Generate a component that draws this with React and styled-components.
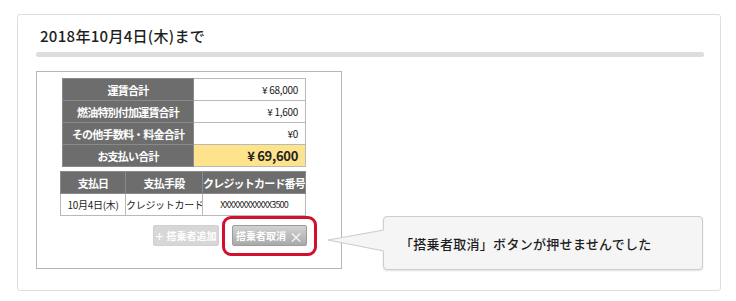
import React from 'react';
import styled, { createGlobalStyle } from 'styled-components';

const GlobalStyle = createGlobalStyle`
  body {
    margin: 0;
    background: #fff;
    font-family: "Noto Sans CJK JP", "Noto Sans", sans-serif;
    color: #222;
  }
`;

const Card = styled.div`
  box-sizing: border-box;
  width: 704px;
  height: 277px;
  margin: 14px 0 0 17px;
  padding: 11px 16px 0 18px;
  border: 1px solid #dedede;
  border-radius: 3px;
`;

const Title = styled.h2`
  margin: 0 0 6px 4px;
  font-size: 15px;
  line-height: 20px;
  font-weight: 500;
  letter-spacing: 0.3px;
  color: #1e1e1e;
`;

const Bar = styled.div`
  height: 5px;
  border-radius: 3px;
  background: #dcdddf;
`;

const Row = styled.div`
  display: flex;
  align-items: flex-end;
  margin-top: 14px;
`;

const Shot = styled.div`
  box-sizing: border-box;
  width: 306px;
  height: 198px;
  padding: 6px 35px 0 23px;
  border: 1px solid #b5b5b5;
  display: flex;
  flex-direction: column;
  align-items: flex-end;
`;

const Grid = styled.table`
  border-collapse: collapse;
  width: ${(p) => p.$w}px;
  margin-bottom: ${(p) => p.$mb || 0}px;
  table-layout: fixed;
  font-size: 10px;
`;

const Head = styled.th`
  height: 21px;
  padding: 0;
  background: #6d6d6d;
  color: #fff;
  font-size: 11px;
  font-weight: 700;
  letter-spacing: -0.8px;
  border: 1px solid #8a8a8a;
  text-align: center;
  white-space: nowrap;
  overflow: hidden;
`;

const Cell = styled.td`
  height: 21px;
  padding: ${(p) => (p.$right ? '0 7px 0 0' : '0')};
  background: ${(p) => (p.$total ? '#fde48c' : '#fff')};
  border: 1px solid #b9b9b9;
  text-align: ${(p) => (p.$right ? 'right' : 'center')};
  font-size: ${(p) => (p.$total ? '13px' : p.$tight ? '9px' : '10px')};
  font-weight: ${(p) => (p.$total ? 700 : 400)};
  letter-spacing: ${(p) => (p.$tight ? '-0.9px' : '-0.3px')};
  color: #222;
  white-space: nowrap;
  overflow: hidden;
`;

const Buttons = styled.div`
  display: flex;
  gap: 13px;
  margin: 9px -1px 0 0;
`;

const Btn = styled.div`
  position: relative;
  box-sizing: border-box;
  height: 21px;
  width: ${(p) => p.$w}px;
  display: flex;
  align-items: center;
  justify-content: center;
  gap: 3px;
  font-size: 10px;
  font-weight: 700;
  white-space: nowrap;
  color: #fff;
  border: 1px solid ${(p) => (p.$active ? '#9c9c9c' : '#d0d0d0')};
  border-radius: 2px;
  background: ${(p) =>
    p.$active ? 'linear-gradient(#d2d2d2, #a9a9a9)' : '#d7d7d7'};

  &::after {
    content: ${(p) => (p.$mark ? "''" : 'none')};
    position: absolute;
    top: -10px;
    left: -11px;
    right: -11px;
    bottom: -11px;
    border: 3px solid #d0102c;
    border-radius: 9px;
  }
`;

const Glyph = styled.span`
  font-size: 14px;
  font-weight: 400;
  line-height: 1;
`;

const Callout = styled.div`
  position: relative;
  box-sizing: border-box;
  width: 320px;
  height: 54px;
  margin: 0 0 -1px 41px;
  padding-left: 16px;
  display: flex;
  align-items: center;
  background: #f5f5f5;
  border: 1px solid #cdcdcd;
  border-radius: 4px;
  box-shadow: 0 1px 2px rgba(0, 0, 0, 0.12);
  font-size: 13px;
  font-weight: 500;
  letter-spacing: 0.3px;
  color: #1e1e1e;
`;

const Pointer = styled.svg`
  position: absolute;
  left: -57px;
  top: 12px;
`;

const fares = [
  ['運賃合計', '¥ 68,000'],
  ['燃油特別付加運賃合計', '¥ 1,600'],
  ['その他手数料・料金合計', '¥0'],
];

export default function App() {
  return (
    <>
      <GlobalStyle />
      <Card>
        <Title>2018年10月4日(木)まで</Title>
        <Bar />
        <Row>
          <Shot>
            <Grid $w={244} $mb={4}>
              <colgroup>
                <col style={{ width: 131 }} />
                <col />
              </colgroup>
              <tbody>
                {fares.map(([k, v]) => (
                  <tr key={k}>
                    <Head>{k}</Head>
                    <Cell $right>{v}</Cell>
                  </tr>
                ))}
                <tr>
                  <Head>お支払い合計</Head>
                  <Cell $right $total>¥ 69,600</Cell>
                </tr>
              </tbody>
            </Grid>
            <Grid $w={246}>
              <colgroup>
                <col style={{ width: 65 }} />
                <col style={{ width: 77 }} />
                <col />
              </colgroup>
              <tbody>
                <tr>
                  <Head>支払日</Head>
                  <Head>支払手段</Head>
                  <Head>クレジットカード番号</Head>
                </tr>
                <tr>
                  <Cell>10月4日(木)</Cell>
                  <Cell>クレジットカード</Cell>
                  <Cell $tight>XXXXXXXXXXXX3500</Cell>
                </tr>
              </tbody>
            </Grid>
            <Buttons>
              <Btn $w={66}>
                <Glyph>+</Glyph>搭乗者追加
              </Btn>
              <Btn $w={75} $active $mark>
                搭乗者取消<Glyph>×</Glyph>
              </Btn>
            </Buttons>
          </Shot>
          <Callout>
            <Pointer width="58" height="23" viewBox="0 0 58 23">
              <polygon points="58,0 0,11 58,23" fill="#f5f5f5" />
              <polyline points="57,1 1,11 57,22" fill="none" stroke="#cdcdcd" strokeWidth="1" />
            </Pointer>
            「搭乗者取消」ボタンが押せませんでした
          </Callout>
        </Row>
      </Card>
    </>
  );
}
